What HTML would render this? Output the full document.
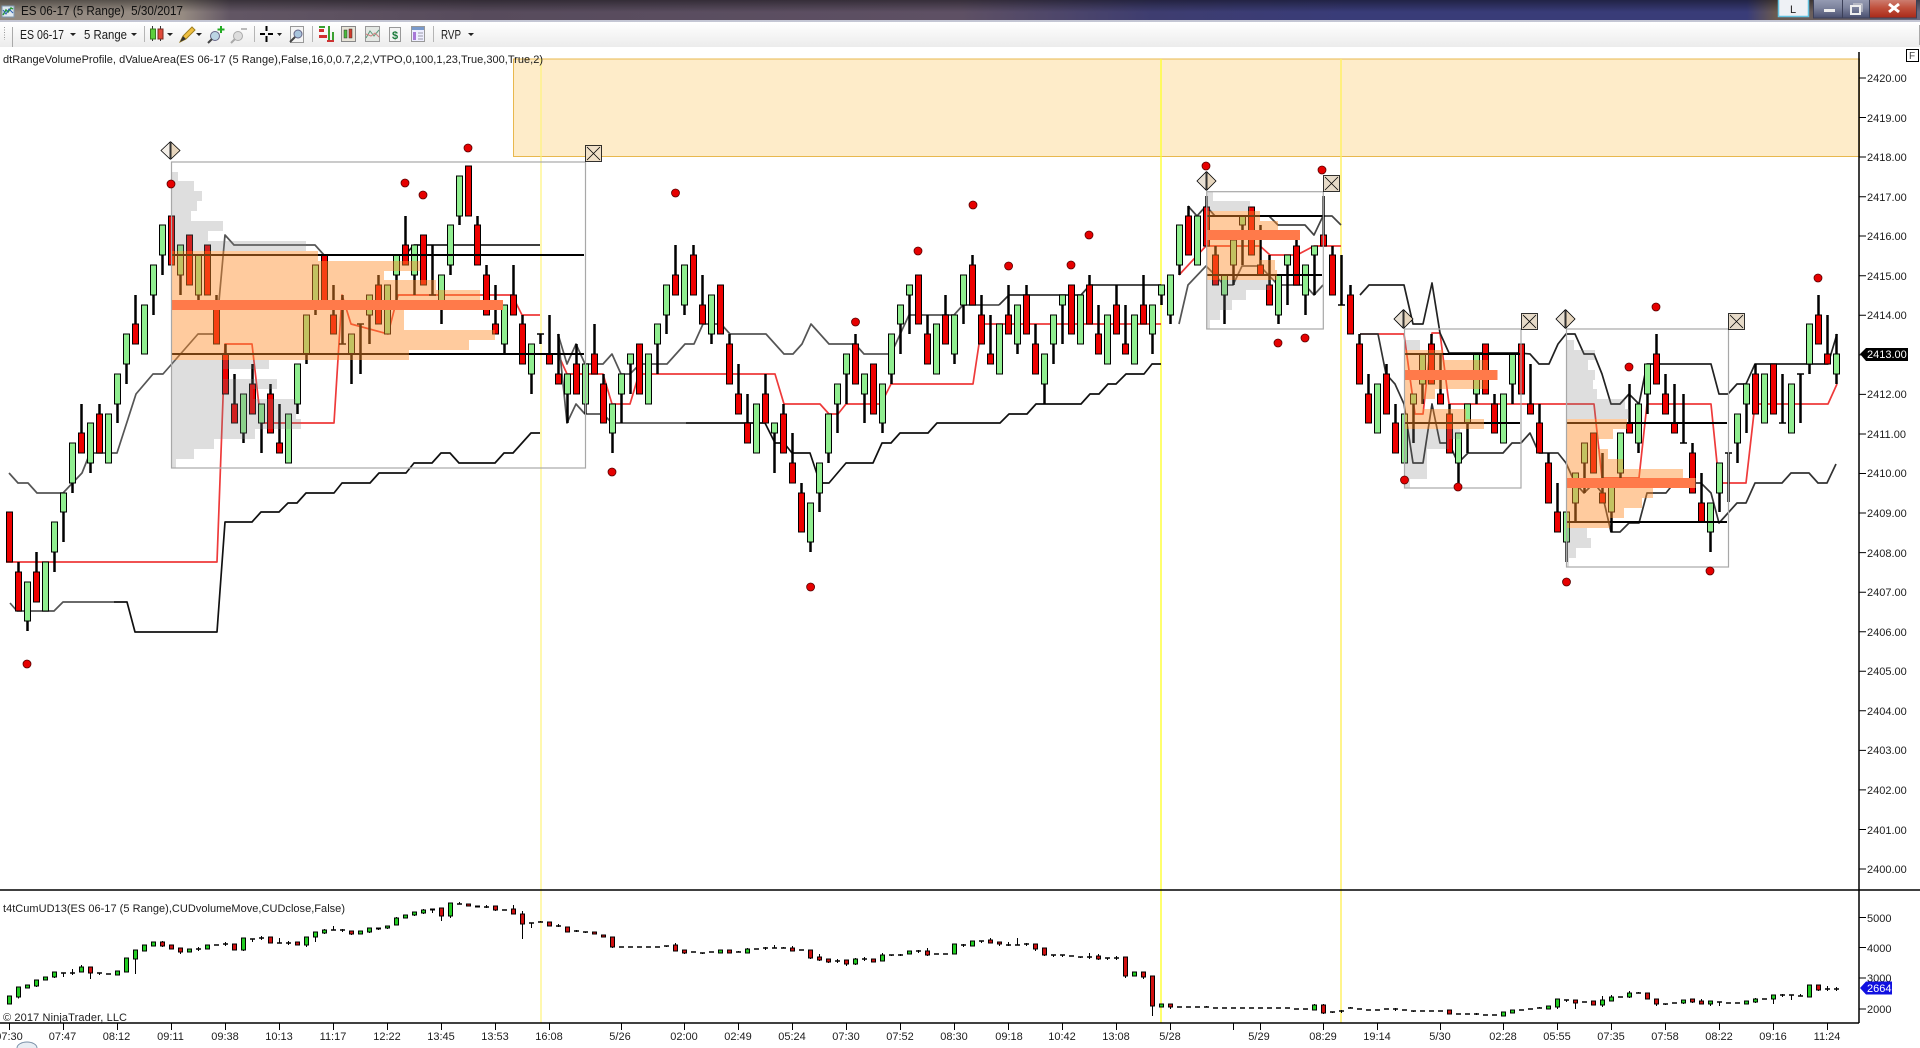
<!DOCTYPE html>
<html><head><meta charset="utf-8"><title>ES 06-17 (5 Range) 5/30/2017</title>
<style>
html,body{margin:0;padding:0;background:#fff;overflow:hidden}
svg{display:block}
text{font-family:"Liberation Sans",sans-serif;fill:#1c1c1c}
</style></head><body>
<svg width="1920" height="1048" viewBox="0 0 1920 1048" xmlns="http://www.w3.org/2000/svg">
<defs>
<linearGradient id="tb" x1="0" x2="1" y1="0" y2="0">
<stop offset="0" stop-color="#938a80"/><stop offset=".095" stop-color="#968b82"/><stop offset=".12" stop-color="#625664"/><stop offset=".25" stop-color="#574b5c"/><stop offset=".5" stop-color="#5e5064"/><stop offset=".6" stop-color="#3e3d70"/><stop offset=".7" stop-color="#393c78"/><stop offset=".91" stop-color="#393c78"/><stop offset=".925" stop-color="#6a5a50"/><stop offset="1" stop-color="#6a6a80"/>
</linearGradient>
<linearGradient id="tv" x1="0" x2="0" y1="0" y2="1"><stop offset="0" stop-color="#000" stop-opacity=".42"/><stop offset=".6" stop-color="#000" stop-opacity="0"/></linearGradient>
<linearGradient id="tool" x1="0" x2="0" y1="0" y2="1"><stop offset="0" stop-color="#fff"/><stop offset="1" stop-color="#ececec"/></linearGradient>
<linearGradient id="wb" x1="0" x2="0" y1="0" y2="1"><stop offset="0" stop-color="#9aa0b8"/><stop offset=".5" stop-color="#7c829c"/><stop offset="1" stop-color="#4a5070"/></linearGradient>
<linearGradient id="wc" x1="0" x2="0" y1="0" y2="1"><stop offset="0" stop-color="#d0887c"/><stop offset=".5" stop-color="#c0503c"/><stop offset="1" stop-color="#a82818"/></linearGradient>
</defs>
<rect width="1920" height="1048" fill="#fff"/>
<!-- title bar -->
<rect width="1920" height="20" fill="url(#tb)"/><rect width="1920" height="20" fill="url(#tv)"/>
<rect y="20" width="1920" height="2" fill="#c4c6d4"/>
<rect y="22" width="1920" height="25" fill="url(#tool)"/>
<rect x="1919" y="25" width="1" height="20" fill="#aaa"/>
<g><rect x="2" y="6" width="12" height="11" fill="#dfe8f0" stroke="#7f98b0"/><path d="M3 15 6 10 8 12 11 8 13 9" fill="none" stroke="#2a9a3a" stroke-width="1.5"/><path d="M3 10 6 14 9 9 13 13" fill="none" stroke="#2a60b0"/></g>
<text x="21" y="15" font-size="13" textLength="162" lengthAdjust="spacingAndGlyphs" style="fill:#111">ES 06-17 (5 Range)&#160;&#160;5/30/2017</text>
<!-- L tab and window buttons -->
<rect x="1778.5" y="-1" width="30" height="17.5" fill="#eef1f5" stroke="#63c2e0" stroke-width="1.5"/>
<text x="1790" y="13" font-size="11" style="fill:#222">L</text>
<rect x="1813.5" y="-2" width="29" height="20" fill="url(#wb)" stroke="#3c4058"/>
<rect x="1842.5" y="-2" width="27" height="20" fill="url(#wb)" stroke="#3c4058"/>
<rect x="1869.5" y="-2" width="47" height="20" fill="url(#wc)" stroke="#3c4058"/>
<rect x="1824" y="9" width="11" height="3" fill="#eee"/>
<rect x="1851" y="6" width="9" height="8" fill="none" stroke="#eee" stroke-width="2"/><path d="M1853 4h9v8" fill="none" stroke="#ddd"/>
<path d="M1889 4 1899 12M1899 4 1889 12" stroke="#fff" stroke-width="3"/>
<!-- toolbar -->
<path d="M4.5 27v13" stroke="#999" stroke-dasharray="1 1.5"/>
<path d="M12.5 27v20" stroke="#aaa"/>
<rect x="144" y="26" width="1" height="16" fill="#b5b5b5"/><rect x="254" y="26" width="1" height="16" fill="#b5b5b5"/><rect x="312" y="26" width="1" height="16" fill="#b5b5b5"/><rect x="433" y="26" width="1" height="16" fill="#b5b5b5"/>
<text x="20" y="39" font-size="13" textLength="44" lengthAdjust="spacingAndGlyphs">ES 06-17</text><text x="84" y="39" font-size="13" textLength="43" lengthAdjust="spacingAndGlyphs">5 Range</text><text x="441" y="39" font-size="13" textLength="20" lengthAdjust="spacingAndGlyphs">RVP</text>
<path d="M70 33h6l-3 3zM131 33h6l-3 3zM167 33h6l-3 3zM196 33h6l-3 3zM277 33h5l-2.500 3zM468 33h6l-3 3z" fill="#222"/>
<path d="M152.500 26v15M160.500 26v15" stroke="#333"/><rect x="150.500" y="29" width="5" height="10" fill="#5ccf3c" stroke="#3a7a20"/><rect x="158" y="29" width="5" height="10" fill="#e04a3a" stroke="#7a2a20"/>
<path d="M180 42l3-6 9-9 3 3-9 9z" fill="#f0c040" stroke="#a08020"/><path d="M180 42l3-6 3 3z" fill="#333"/>
<circle cx="215" cy="36" r="4.500" fill="#bcd4e4" stroke="#668"/><path d="M212 39l-4 4" stroke="#444" stroke-width="2"/><path d="M221 26v7M217.500 29.500h7" stroke="#22aa22" stroke-width="2"/>
<circle cx="238" cy="36" r="4.500" fill="#ddd" stroke="#aaa"/><path d="M235 39l-4 4" stroke="#aaa" stroke-width="2"/><path d="M241 29h6" stroke="#bbb" stroke-width="2"/>
<path d="M266.500 26v5M266.500 36v6M260 34h5M268 34h5" stroke="#000" stroke-width="2"/>
<rect x="290.500" y="26.500" width="13" height="16" fill="#f4f4f4" stroke="#999"/><circle cx="298" cy="34" r="4" fill="#a8c4dc" stroke="#668"/><path d="M295 37l-5 5" stroke="#444" stroke-width="2"/>
<path d="M319 29h5v3h-5zM319 35h8v3h-8z" fill="#d03030"/><path d="M319 26h6v2h-6z" fill="#3aa030"/><path d="M329 26v15M333 32v10" stroke="#3aa030" stroke-width="2"/><path d="M327 41h7" stroke="#c33" stroke-width="2"/>
<rect x="341.500" y="26.500" width="14" height="15" fill="#e8e4d8" stroke="#888"/><rect x="344" y="30" width="3" height="8" fill="#4aba3a" stroke="#333" stroke-width=".5"/><rect x="349" y="29" width="3" height="9" fill="#d03a2a" stroke="#333" stroke-width=".5"/>
<rect x="365.500" y="26.500" width="14" height="15" fill="#e4e8e4" stroke="#999"/><path d="M366 38 370 31 374 36 379 30" fill="none" stroke="#5a9a7a"/><path d="M366 34 371 36 375 33 379 37" fill="none" stroke="#d08080"/>
<rect x="389.500" y="27.500" width="11" height="14" fill="#f4f4f4" stroke="#999"/><text x="392" y="39" font-size="11" font-weight="bold" style="fill:#1a7a3a">$</text>
<rect x="411.500" y="26.500" width="13" height="15" fill="#eef" stroke="#999"/><rect x="412" y="27" width="12" height="3" fill="#7a9acc"/><rect x="413" y="32" width="3" height="8" fill="#a878d8"/><path d="M418 33h5M418 36h5M418 39h5" stroke="#99a"/>
<!-- zone -->
<rect x="513.500" y="59" width="1346" height="97.500" fill="#feecc9" stroke="#e8b84e"/>
<!-- yellow verticals -->
<path d="M541 59V1023" stroke="#fff27a" stroke-width="1.200"/><path d="M1161 59V1023" stroke="#ffff30" stroke-width="1.400"/><path d="M1341 59V1023" stroke="#fff066" stroke-width="1.500"/>
<!-- indicator lines -->
<g fill="none" stroke-width="1.700" stroke-linejoin="round">
<polyline stroke="#ee3a3a" points="6,562 217,562 225,344 252,344 261,423 334,423 342,295 351,324 388,334 398,295 512,295 522,315 540,315"/>
<polyline stroke="#ee3a3a" points="558,354 567,374 603,374 612,404 630,404 639,374 775,374 784,404 820,404 829,414 838,414 846,404 881,404 891,384 973,384 982,324 1161,324"/>
<polyline stroke="#ee3a3a" points="1179,275 1206,246 1260,246 1270,255 1297,255 1314,246 1341,246"/>
<polyline stroke="#ee3a3a" points="1360,334 1404,334 1415,414 1423,414 1432,333 1440,333 1449,404 1594,404 1602,478 1639,478 1647,404 1711,404 1719,483 1746,483 1755,404 1828,404 1837,384"/>
<polyline stroke="#555" points="9,473 18,483 28,483 37,493 63,493 82,473 90,453 117,453 136,394 153,374 163,374 198,334 216,334 225,235 234,245 315,245 324,255"/>
<polyline stroke="#222" points="405,255 414,245 540,245"/>
<polyline stroke="#555" points="10,603 17,611 54,611 63,602 114,602"/>
<polyline stroke="#111" points="114,602 127,602 135,632 217,632 225,522 252,522 261,512 279,512 288,503 297,503 306,493 334,493 342,483 370,483 379,473 406,473 414,463 432,463 441,453 450,453 459,463 495,463 504,453 513,453 531,433 540,433"/>
<polyline stroke="#555" points="558,334 567,364 576,344 585,364 603,364 612,354 621,374 630,374 640,364 667,364 685,344 694,344 703,324 721,324 730,334 766,334 784,354 793,354 802,344 811,324 829,344 855,344 864,354 891,354 909,315 954,315 963,305 999,305"/>
<polyline stroke="#333" points="999,305 1009,295 1081,295 1090,285 1161,285"/>
<polyline stroke="#555" points="558,334 567,423 576,404 585,414 603,414 612,423 686,423"/>
<polyline stroke="#111" points="686,423 765,423 775,443 784,443 792,453 810,453 820,483 829,483 846,463 873,463 882,443 891,443 900,433 928,433 937,423 1000,423 1009,414 1027,414 1036,404 1081,404 1090,394 1099,394 1108,384 1116,384 1126,374 1144,374 1152,364 1161,364"/>
<polyline stroke="#444" points="1188,206 1197,216 1206,206 1215,216 1269,216 1278,225 1305,225 1314,235 1323,216 1332,216 1341,225"/>
<polyline stroke="#555" points="1179,324 1188,285 1206,266 1215,275 1224,285 1233,285 1242,266 1260,266 1278,285 1305,285 1314,295 1323,285"/>
<polyline stroke="#222" points="1360,295 1369,285 1404,285 1413,324 1423,324 1432,283 1440,333 1449,353 1519,353 1530,354 1539,364 1549,364 1558,344 1566,334 1575,334 1584,354 1594,354 1602,374 1611,404 1620,404 1629,394 1639,404 1647,364 1711,364 1719,394 1728,394 1737,384 1746,384 1755,364 1828,364 1837,334"/>
<polyline stroke="#333" points="1360,334 1378,334 1386,374 1395,384 1404,404 1413,463 1423,463 1432,404 1440,443 1449,443 1458,463 1468,453 1503,453 1512,443 1521,443 1530,433 1539,453 1558,453 1566,463 1575,483 1584,493 1594,483 1602,493 1611,532 1620,532 1629,523 1639,523 1647,493 1666,493 1674,483 1701,483 1711,493 1719,523 1728,513 1737,503 1746,503 1755,483 1782,483 1791,473 1809,473 1818,483 1827,483 1836,464"/>
</g>
<!-- main wicks -->
<path fill="none" stroke="#000" stroke-width="2.500" d="M18.500 562V572M27.500 621V631M36.500 552V572M54.500 552V572M63.500 512V542M72.500 483V493M81.500 404V433M90.500 463V473M99.500 404V414M117.500 404V423M126.500 364V384M135.500 295V324M153.500 295V315M162.500 255V275M180.500 275V295M198.500 295V300M216.500 295V305M225.500 344V354M234.500 374V404M243.500 433V443M252.500 364V384M261.500 423V453M270.500 384V394M279.500 404V443M297.500 404V414M306.500 354V364M315.500 305V315M333.500 285V315M342.500 295V344M351.500 354V384M360.500 324V374M369.500 315V344M378.500 275V285M396.500 275V300M405.500 216V245M414.500 275V295M432.500 245V295M441.500 305V324M450.500 265V275M459.500 216V225M477.500 216V225M486.500 265V275M495.500 285V324M504.500 344V354M513.500 265V295M522.500 315V324M531.500 374V394M540.500 334V344M549.500 315V354M558.500 334V374M567.500 394V423M576.500 344V364M585.500 404V414M594.500 324V354M603.500 374V384M612.500 433V453M621.500 394V423M630.500 364V394M657.500 344V374M666.500 315V334M675.500 245V275M684.500 305V315M693.500 245V255M702.500 275V305M711.500 334V344M729.500 334V344M738.500 364V394M747.500 394V423M765.500 374V394M774.500 433V473M783.500 404V414M792.500 433V463M801.500 483V493M810.500 542V552M819.500 493V512M828.500 453V463M837.500 404V433M846.500 374V404M855.500 334V344M864.500 394V423M882.500 423V433M891.500 374V384M900.500 324V354M909.500 295V334M927.500 315V334M945.500 295V315M954.500 354V364M963.500 305V324M972.500 255V265M981.500 295V315M990.500 315V354M1008.500 285V315M1017.500 344V354M1026.500 285V295M1035.500 324V344M1044.500 384V404M1053.500 344V364M1062.500 305V344M1089.500 275V285M1098.500 305V334M1116.500 285V305M1125.500 305V344M1143.500 275V305M1152.500 334V354M1161.500 295V305M1170.500 315V324M1179.500 265V275M1188.500 206V216M1206.500 196V207M1215.500 246V255M1224.500 295V324M1233.500 265V285M1242.500 225V265M1260.500 225V265M1269.500 255V285M1278.500 315V324M1287.500 265V305M1296.500 240V246M1305.500 295V315M1314.500 255V295M1323.500 196V235M1332.500 246V255M1341.500 255V305M1350.500 285V295M1359.500 334V344M1368.500 374V394M1386.500 364V374M1395.500 404V423M1413.500 404V443M1422.500 384V404M1431.500 334V344M1440.500 354V394M1449.500 404V414M1458.500 463V483M1467.500 423V453M1476.500 394V404M1494.500 394V404M1512.500 384V404M1530.500 364V404M1539.500 404V423M1548.500 453V463M1557.500 483V512M1566.500 542V562M1575.500 503V523M1584.500 463V493M1602.500 453V493M1611.500 512V532M1620.500 473V483M1629.500 384V423M1638.500 443V453M1647.500 394V414M1656.500 334V354M1665.500 374V394M1674.500 384V423M1683.500 394V443M1692.500 443V453M1701.500 473V503M1710.500 532V552M1719.500 493V512M1728.500 453V502M1737.500 443V463M1746.500 404V433M1755.500 364V374M1782.500 374V423M1800.500 374V423M1809.500 364V374M1818.500 295V315M1827.500 315V354M1836.500 334V354M1836.500 374V384"/>
<path fill="none" stroke="#000" stroke-width="1.500" d="M339 344h7M357 324h7M429 295h7M537 334h7M1338 305h7M1680 443h7M1725 453h7M1779 423h7M1797 374h7"/>
<!-- green bodies -->
<path fill="#90ee90" stroke="#000" d="M24.500 582h6V621h-6zM42.500 562h6V611h-6zM51.500 522h6V552h-6zM60.500 493h6V512h-6zM69.500 443h6V483h-6zM87.500 423h6V463h-6zM105.500 414h6V463h-6zM114.500 374h6V404h-6zM123.500 334h6V364h-6zM141.500 305h6V354h-6zM150.500 265h6V295h-6zM159.500 225h6V255h-6zM177.500 245h6V275h-6zM195.500 255h6V295h-6zM240.500 394h6V433h-6zM258.500 404h6V423h-6zM285.500 414h6V463h-6zM294.500 364h6V404h-6zM303.500 315h6V354h-6zM312.500 265h6V305h-6zM348.500 334h6V354h-6zM366.500 295h6V315h-6zM384.500 285h6V334h-6zM393.500 255h6V275h-6zM411.500 245h6V275h-6zM438.500 275h6V305h-6zM447.500 225h6V265h-6zM456.500 176h6V216h-6zM501.500 305h6V344h-6zM528.500 344h6V374h-6zM564.500 374h6V394h-6zM582.500 364h6V404h-6zM609.500 404h6V433h-6zM618.500 374h6V394h-6zM627.500 354h6V364h-6zM645.500 354h6V404h-6zM654.500 324h6V344h-6zM663.500 285h6V315h-6zM681.500 265h6V305h-6zM708.500 295h6V334h-6zM753.500 404h6V453h-6zM771.500 423h6V433h-6zM807.500 503h6V542h-6zM816.500 463h6V493h-6zM825.500 414h6V453h-6zM834.500 384h6V404h-6zM843.500 354h6V374h-6zM861.500 374h6V394h-6zM879.500 384h6V423h-6zM888.500 334h6V374h-6zM897.500 305h6V324h-6zM906.500 285h6V295h-6zM933.500 324h6V374h-6zM951.500 315h6V354h-6zM960.500 275h6V305h-6zM996.500 324h6V374h-6zM1014.500 305h6V344h-6zM1041.500 354h6V384h-6zM1050.500 315h6V344h-6zM1059.500 295h6V305h-6zM1077.500 295h6V344h-6zM1104.500 315h6V364h-6zM1131.500 315h6V364h-6zM1149.500 305h6V334h-6zM1158.500 285h6V295h-6zM1167.500 275h6V315h-6zM1176.500 225h6V265h-6zM1194.500 216h6V265h-6zM1221.500 275h6V295h-6zM1230.500 240h6V265h-6zM1239.500 216h6V225h-6zM1275.500 275h6V315h-6zM1284.500 255h6V265h-6zM1302.500 265h6V295h-6zM1311.500 246h6V255h-6zM1374.500 384h6V433h-6zM1401.500 414h6V463h-6zM1410.500 394h6V404h-6zM1419.500 354h6V384h-6zM1455.500 433h6V463h-6zM1464.500 404h6V423h-6zM1473.500 354h6V394h-6zM1500.500 394h6V443h-6zM1509.500 354h6V384h-6zM1563.500 512h6V542h-6zM1572.500 473h6V503h-6zM1581.500 443h6V463h-6zM1608.500 483h6V512h-6zM1617.500 433h6V473h-6zM1635.500 404h6V443h-6zM1644.500 364h6V394h-6zM1707.500 503h6V532h-6zM1716.500 463h6V493h-6zM1734.500 414h6V443h-6zM1743.500 384h6V404h-6zM1761.500 374h6V423h-6zM1788.500 384h6V433h-6zM1806.500 324h6V364h-6zM1833.500 354h6V374h-6z"/>
<!-- red bodies -->
<path fill="#ee0000" stroke="#000" d="M6.500 512h6V562h-6zM15.500 572h6V611h-6zM33.500 572h6V602h-6zM78.500 433h6V453h-6zM96.500 414h6V453h-6zM132.500 324h6V344h-6zM168.500 216h6V265h-6zM186.500 235h6V285h-6zM204.500 245h6V295h-6zM213.500 305h6V344h-6zM222.500 354h6V394h-6zM231.500 404h6V423h-6zM249.500 384h6V414h-6zM267.500 394h6V433h-6zM276.500 443h6V453h-6zM321.500 255h6V305h-6zM330.500 315h6V334h-6zM375.500 285h6V324h-6zM402.500 245h6V265h-6zM420.500 235h6V285h-6zM465.500 166h6V216h-6zM474.500 225h6V265h-6zM483.500 275h6V315h-6zM492.500 324h6V334h-6zM510.500 295h6V315h-6zM519.500 324h6V364h-6zM546.500 354h6V364h-6zM555.500 374h6V384h-6zM573.500 364h6V394h-6zM591.500 354h6V374h-6zM600.500 384h6V423h-6zM636.500 344h6V394h-6zM672.500 275h6V295h-6zM690.500 255h6V295h-6zM699.500 305h6V324h-6zM717.500 285h6V334h-6zM726.500 344h6V384h-6zM735.500 394h6V414h-6zM744.500 423h6V443h-6zM762.500 394h6V423h-6zM780.500 414h6V453h-6zM789.500 463h6V483h-6zM798.500 493h6V532h-6zM852.500 344h6V384h-6zM870.500 364h6V414h-6zM915.500 275h6V324h-6zM924.500 334h6V364h-6zM942.500 315h6V344h-6zM969.500 265h6V305h-6zM978.500 315h6V344h-6zM987.500 354h6V364h-6zM1005.500 315h6V334h-6zM1023.500 295h6V334h-6zM1032.500 344h6V374h-6zM1068.500 285h6V334h-6zM1086.500 285h6V324h-6zM1095.500 334h6V354h-6zM1113.500 305h6V334h-6zM1122.500 344h6V354h-6zM1140.500 305h6V324h-6zM1185.500 216h6V255h-6zM1203.500 207h6V246h-6zM1212.500 255h6V285h-6zM1248.500 207h6V255h-6zM1257.500 265h6V275h-6zM1266.500 285h6V305h-6zM1293.500 246h6V285h-6zM1320.500 235h6V246h-6zM1329.500 255h6V295h-6zM1347.500 295h6V334h-6zM1356.500 344h6V384h-6zM1365.500 394h6V423h-6zM1383.500 374h6V414h-6zM1392.500 423h6V453h-6zM1428.500 344h6V384h-6zM1437.500 394h6V404h-6zM1446.500 414h6V453h-6zM1482.500 344h6V394h-6zM1491.500 404h6V433h-6zM1518.500 344h6V394h-6zM1527.500 404h6V414h-6zM1536.500 423h6V453h-6zM1545.500 463h6V503h-6zM1554.500 512h6V532h-6zM1590.500 433h6V473h-6zM1599.500 493h6V503h-6zM1626.500 423h6V433h-6zM1653.500 354h6V384h-6zM1662.500 394h6V414h-6zM1671.500 423h6V433h-6zM1689.500 453h6V493h-6zM1698.500 503h6V522h-6zM1752.500 374h6V414h-6zM1770.500 364h6V414h-6zM1815.500 315h6V344h-6zM1824.500 354h6V364h-6z"/>
<!-- value area lines -->
<g stroke="#000" stroke-width="2"><path d="M171 255H584M171 354H584M1207 216H1323M1207 275H1322M1405 354H1520M1405 423H1520M1567 423H1727M1567 522H1727"/></g>
<!-- profile gray -->
<path fill="#808080" fill-opacity=".26" d="M171 172h7v9h-7zM171 181h23v10h-23zM171 191h31v10h-31zM171 201h26v10h-26zM171 211h20v10h-20zM171 221h52v10h-52zM171 231h37v10h-37zM171 241h135v10h-135zM171 360h98v9h-98zM171 369h52v10h-52zM171 379h106v10h-106zM171 389h82v10h-82zM171 399h125v20h-125zM171 419h130v10h-130zM171 429h84v10h-84zM171 439h43v10h-43zM171 449h23v10h-23zM171 459h5v9h-5zM1207 192h6v9h-6zM1207 201h43v10h-43zM1207 280h63v10h-63zM1207 290h39v10h-39zM1207 300h25v10h-25zM1207 310h13v10h-13zM1207 320h3v9h-3zM1405 340h15v10h-15zM1405 429h55v10h-55zM1405 439h44v10h-44zM1405 449h22v30h-22zM1405 479h5v9h-5zM1567 340h7v10h-7zM1567 350h28v10h-28zM1567 360h21v10h-21zM1567 370h28v10h-28zM1567 380h26v9h-26zM1567 389h30v10h-30zM1567 399h58v10h-58zM1567 409h62v10h-62zM1567 528h20v10h-20zM1567 538h24v10h-24zM1567 548h9v10h-9zM1567 558h2v9h-2z"/>
<!-- profile orange -->
<path fill="#ff8c28" fill-opacity=".45" d="M171 251h147v10h-147zM171 261h249v10h-249zM171 271h213v9h-213zM171 280h265v10h-265zM171 290h309v10h-309zM171 310h233v20h-233zM171 330h324v10h-324zM171 340h298v10h-298zM171 350h238v10h-238zM1207 211h53v10h-53zM1207 221h71v9h-71zM1207 240h53v20h-53zM1207 260h68v10h-68zM1207 270h70v10h-70zM1405 350h38v10h-38zM1405 360h83v10h-83zM1405 380h83v9h-83zM1405 389h30v10h-30zM1405 399h18v10h-18zM1405 409h61v10h-61zM1405 419h79v10h-79zM1567 419h60v10h-60zM1567 429h46v10h-46zM1567 439h31v10h-31zM1567 449h41v10h-41zM1567 459h56v10h-56zM1567 469h116v9h-116zM1567 488h86v10h-86zM1567 498h75v10h-75zM1567 508h57v10h-57zM1567 518h43v10h-43z"/>
<!-- POC -->
<path fill="#ff7a4a" d="M171 300h332v10h-332zM1207 230h93v10h-93zM1405 370h92.500v10h-92.500zM1567 478h128.500v10h-128.500z"/>
<!-- boxes -->
<g fill="none" stroke="#a8a8a8" stroke-width="1.200"><rect x="171.500" y="162" width="414" height="306"/><rect x="1206.700" y="191.700" width="116.600" height="137.300"/><rect x="1404.500" y="329" width="116.500" height="159"/><rect x="1566.500" y="329" width="162" height="238"/></g>
<!-- diamonds & X boxes -->
<g stroke="#000" stroke-width=".8">
<path d="M170 142v17l-9-8.500z" fill="#f4efe8"/><path d="M171 142v17l9-8.500z" fill="#e6d5bd"/>
<path d="M1206 172v18l-9-9z" fill="#e8e0d4"/><path d="M1207 172v18l9-9z" fill="#e6d5bd"/>
<path d="M1403 310v18l-9-9z" fill="#e8e0d4"/><path d="M1404 310v18l9-9z" fill="#e6d5bd"/>
<path d="M1565 310v18l-9-9z" fill="#e8e0d4"/><path d="M1566 310v18l9-9z" fill="#e6d5bd"/>
<rect x="585.500" y="145.500" width="16" height="16" fill="#f0e0c8"/><path d="M587 147 600 160M600 147 587 160" fill="none"/>
<rect x="1323.500" y="175.500" width="16" height="16" fill="#e6dac8"/><path d="M1325 177 1338 190M1338 177 1325 190" fill="none"/>
<rect x="1521.500" y="313.500" width="16" height="16" fill="#e6dac8"/><path d="M1523 315 1536 328M1536 315 1523 328" fill="none"/>
<rect x="1728.500" y="313.500" width="16" height="16" fill="#e6dac8"/><path d="M1730 315 1743 328M1743 315 1730 328" fill="none"/>
</g>
<!-- dots -->
<g fill="#e60000" stroke="#5a0000" stroke-width=".8">
<circle cx="171" cy="184" r="4"/><circle cx="405" cy="183" r="4"/><circle cx="423" cy="195" r="4"/><circle cx="468" cy="148" r="4"/><circle cx="612" cy="472" r="4"/><circle cx="27" cy="664" r="4"/><circle cx="675.500" cy="193" r="4"/><circle cx="973" cy="205" r="4"/><circle cx="918" cy="251" r="4"/><circle cx="1089" cy="235" r="4"/><circle cx="1008.600" cy="266" r="4"/><circle cx="1071" cy="265" r="4"/><circle cx="855.500" cy="322" r="4"/><circle cx="810.600" cy="587" r="4"/><circle cx="1206" cy="166" r="4"/><circle cx="1278" cy="343" r="4"/><circle cx="1305" cy="338" r="4"/><circle cx="1322" cy="170" r="4"/><circle cx="1404.500" cy="480" r="4"/><circle cx="1458" cy="487" r="4"/><circle cx="1656" cy="307" r="4"/><circle cx="1629" cy="367" r="4"/><circle cx="1566.500" cy="582" r="4"/><circle cx="1710" cy="571" r="4"/><circle cx="1818" cy="278" r="4"/>
</g>
<!-- lower panel wicks -->
<path fill="none" stroke="#000" stroke-width="1" d="M18.500 997V998.500M36.500 986V987M54.500 977V978M63.500 973V977M72.500 969V975M81.500 965V967M90.500 973V979M99.500 973V975M135.500 959V974M162.500 941V947M180.500 952V954M198.500 947V951M225.500 942V946M243.500 950V951M252.500 939V942M261.500 936V940M279.500 938V943M288.500 941V945M306.500 945V947M315.500 937V942M324.500 929V934M333.500 926V930M342.500 929V932M351.500 934V935M369.500 932V933M378.500 929V930M387.500 928V929M396.500 917V918M414.500 915V916M423.500 909V914M432.500 910V913M441.500 916V921M450.500 916V918M459.500 902V904M486.500 905V908M495.500 910V911M513.500 905V909M522.500 911V939M531.500 923V928M540.500 921V922M558.500 924V927M576.500 930V932M585.500 932V933M612.500 947V948M666.500 946V947M675.500 943V945M684.500 953V954M702.500 953V954M738.500 951V952M747.500 948V949M765.500 947V950M774.500 945V948M783.500 947V948M792.500 946V948M810.500 958V959M819.500 954V961M828.500 962V963M837.500 959V963M846.500 964V966M855.500 958V965M864.500 957V961M882.500 953V955M891.500 955V956M900.500 954V956M918.500 950V953M927.500 948V956M963.500 944V947M981.500 941V943M990.500 938V940M999.500 944V946M1008.500 942V946M1017.500 938V945M1026.500 943V946M1035.500 949V951M1044.500 955V956M1053.500 955V957M1062.500 955V957M1080.500 957V958M1089.500 953V959M1098.500 954V960M1107.500 958V960M1116.500 956V960M1125.500 976V978M1143.500 977V979M1152.500 1006V1016M1170.500 1007V1009M1206.500 1006V1007M1314.500 1004V1005M1323.500 1004V1014M1332.500 1012V1013M1341.500 1010V1013M1350.500 1007V1008M1395.500 1008V1011M1413.500 1011V1012M1476.500 1013V1015M1539.500 1007V1008M1557.500 1007V1009M1566.500 1000V1002M1575.500 1003V1009M1602.500 996V1007M1611.500 995V997M1629.500 991V998M1638.500 992V993M1656.500 1004V1006M1665.500 1004V1005M1683.500 1003V1004M1692.500 1002V1003M1701.500 999V1001M1710.500 1004V1006M1719.500 1002V1006M1755.500 998V1003M1773.500 999V1004M1782.500 994V997M1791.500 995V1000M1800.500 994V996M1818.500 990V991M1827.500 986V991M1836.500 987V991"/>
<!-- lower panel dojis -->
<path fill="none" stroke="#000" stroke-width="1.500" d="M61 973h5M70 973h5M97 973h5M106 974h5M196 949h5M214 945h5M223 944h5M250 939h5M259 938h5M277 943h5M286 943h5M331 930h5M340 930h5M457 904h5M484 907h5M502 910h5M529 923h5M538 922h5M556 926h5M574 931h5M583 932h5M619 947h5M628 947h5M637 947h5M646 947h5M655 947h5M664 946h5M691 952h5M700 953h5M709 952h5M736 952h5M754 949h5M763 948h5M772 948h5M781 948h5M799 950h5M835 961h5M862 959h5M889 955h5M898 955h5M916 951h5M934 954h5M943 954h5M961 945h5M979 941h5M1006 945h5M1015 945h5M1024 944h5M1051 955h5M1060 955h5M1069 956h5M1078 957h5M1087 957h5M1105 958h5M1114 958h5M1177 1007h5M1186 1007h5M1195 1007h5M1204 1007h5M1213 1008h5M1222 1008h5M1231 1008h5M1240 1008h5M1249 1008h5M1258 1008h5M1267 1008h5M1276 1008h5M1285 1008h5M1294 1009h5M1303 1009h5M1330 1012h5M1339 1011h5M1348 1008h5M1357 1009h5M1366 1010h5M1375 1010h5M1384 1009h5M1393 1009h5M1402 1010h5M1411 1011h5M1420 1011h5M1429 1011h5M1438 1011h5M1456 1014h5M1465 1014h5M1474 1014h5M1483 1015h5M1492 1015h5M1519 1010h5M1528 1009h5M1537 1008h5M1564 1000h5M1582 1002h5M1618 997h5M1636 993h5M1663 1004h5M1672 1003h5M1717 1002h5M1726 1003h5M1735 1003h5M1762 999h5M1780 995h5M1789 995h5M1798 996h5M1825 989h5M1834 989h5"/>
<!-- lower green -->
<path fill="#22cc22" stroke="#000" d="M7.500 996h4V1004h-4zM16.500 987h4V997h-4zM25.500 985h4V988h-4zM34.500 980h4V986h-4zM43.500 977h4V980h-4zM52.500 972h4V977h-4zM79.500 967h4V972h-4zM115.500 971h4V975h-4zM124.500 958h4V972h-4zM133.500 950h4V959h-4zM142.500 945h4V951h-4zM151.500 942h4V946h-4zM187.500 949h4V952h-4zM205.500 945h4V949h-4zM241.500 938h4V950h-4zM304.500 937h4V945h-4zM313.500 932h4V937h-4zM322.500 930h4V933h-4zM358.500 931h4V934h-4zM367.500 928h4V932h-4zM385.500 926h4V928h-4zM394.500 918h4V925h-4zM403.500 915h4V918h-4zM412.500 912h4V915h-4zM421.500 910h4V913h-4zM430.500 909h4V910h-4zM448.500 903h4V916h-4zM718.500 950h4V953h-4zM745.500 949h4V953h-4zM853.500 959h4V964h-4zM880.500 955h4V961h-4zM907.500 951h4V954h-4zM952.500 944h4V954h-4zM970.500 941h4V946h-4zM1132.500 972h4V976h-4zM1159.500 1004h4V1007h-4zM1312.500 1005h4V1010h-4zM1501.500 1012h4V1016h-4zM1510.500 1010h4V1013h-4zM1546.500 1006h4V1009h-4zM1555.500 999h4V1007h-4zM1600.500 1000h4V1005h-4zM1609.500 997h4V1001h-4zM1627.500 993h4V997h-4zM1681.500 1000h4V1003h-4zM1708.500 1001h4V1004h-4zM1744.500 1001h4V1004h-4zM1753.500 999h4V1002h-4zM1771.500 995h4V999h-4zM1807.500 985h4V997h-4z"/>
<!-- lower red -->
<path fill="#d01010" stroke="#000" d="M88.500 967h4V973h-4zM160.500 942h4V946h-4zM169.500 945h4V949h-4zM178.500 948h4V952h-4zM232.500 944h4V950h-4zM268.500 937h4V943h-4zM295.500 942h4V945h-4zM349.500 931h4V934h-4zM376.500 928h4V929h-4zM439.500 908h4V916h-4zM466.500 904h4V906h-4zM475.500 906h4V907h-4zM493.500 906h4V910h-4zM511.500 909h4V914h-4zM520.500 914h4V924h-4zM547.500 922h4V926h-4zM565.500 927h4V932h-4zM592.500 932h4V934h-4zM601.500 935h4V937h-4zM610.500 937h4V947h-4zM673.500 945h4V951h-4zM682.500 950h4V953h-4zM727.500 950h4V953h-4zM790.500 948h4V951h-4zM808.500 950h4V958h-4zM817.500 957h4V960h-4zM826.500 959h4V962h-4zM844.500 960h4V964h-4zM871.500 959h4V962h-4zM925.500 951h4V955h-4zM988.500 940h4V943h-4zM997.500 942h4V944h-4zM1033.500 944h4V949h-4zM1042.500 948h4V955h-4zM1096.500 956h4V959h-4zM1123.500 957h4V976h-4zM1141.500 972h4V977h-4zM1150.500 976h4V1006h-4zM1168.500 1004h4V1007h-4zM1321.500 1005h4V1013h-4zM1447.500 1010h4V1014h-4zM1573.500 1000h4V1003h-4zM1591.500 1001h4V1005h-4zM1645.500 993h4V999h-4zM1654.500 999h4V1004h-4zM1690.500 999h4V1002h-4zM1699.500 1001h4V1004h-4zM1816.500 985h4V990h-4z"/>
<!-- axes -->
<path d="M0 890H1920M0 1023H1859M1859 52V1023" stroke="#000" stroke-width="1.500" fill="none"/>
<path stroke="#000" fill="none" d="M1859 78h7M1859 117.500h7M1859 157h7M1859 196.700h7M1859 236h7M1859 275.800h7M1859 315.300h7M1859 354.900h7M1859 394.400h7M1859 434h7M1859 473.500h7M1859 513h7M1859 552.600h7M1859 592.200h7M1859 631.700h7M1859 671.300h7M1859 710.800h7M1859 750.400h7M1859 789.900h7M1859 829.500h7M1859 869h7M1859 917.500h7M1859 947.500h7M1859 978h7M1859 1009h7M9.500 1023v7M63.500 1023v7M117.500 1023v7M171.500 1023v7M225.500 1023v7M279.500 1023v7M333.500 1023v7M387.500 1023v7M441.500 1023v7M495.500 1023v7M549.500 1023v7M621.500 1023v7M684.500 1023v7M738.500 1023v7M792.500 1023v7M846.500 1023v7M900.500 1023v7M954.500 1023v7M1008.500 1023v7M1062.500 1023v7M1116.500 1023v7M1170.500 1023v7M1233.500 1023v7M1260.500 1023v7M1323.500 1023v7M1377.500 1023v7M1440.500 1023v7M1503.500 1023v7M1557.500 1023v7M1611.500 1023v7M1665.500 1023v7M1719.500 1023v7M1773.500 1023v7M1827.500 1023v7"/>
<g font-size="11">
<text x="1867" y="82">2420.00</text><text x="1867" y="122">2419.00</text><text x="1867" y="161">2418.00</text><text x="1867" y="201">2417.00</text><text x="1867" y="240">2416.00</text><text x="1867" y="280">2415.00</text><text x="1867" y="319">2414.00</text><text x="1867" y="398">2412.00</text><text x="1867" y="438">2411.00</text><text x="1867" y="477">2410.00</text><text x="1867" y="517">2409.00</text><text x="1867" y="557">2408.00</text><text x="1867" y="596">2407.00</text><text x="1867" y="636">2406.00</text><text x="1867" y="675">2405.00</text><text x="1867" y="715">2404.00</text><text x="1867" y="754">2403.00</text><text x="1867" y="794">2402.00</text><text x="1867" y="834">2401.00</text><text x="1867" y="873">2400.00</text>
<text x="1867" y="922">5000</text><text x="1867" y="952">4000</text><text x="1867" y="982">3000</text><text x="1867" y="1013">2000</text>
</g>
<path d="M1860 354 1866 348H1908V361H1866z" fill="#000"/><text x="1867" y="358" font-size="11" style="fill:#fff">2413.00</text>
<path d="M1860 988 1866 981.500H1892V994.500H1866z" fill="#1010e0"/><text x="1867" y="992" font-size="11" style="fill:#fff">2664</text>
<rect x="1906.500" y="49.500" width="12" height="12" fill="#fff" stroke="#000"/><text x="1909" y="59" font-size="10" style="fill:#444">F</text>
<g font-size="11" text-anchor="middle">
<text x="9" y="1040">07:30</text><text x="62.500" y="1040">07:47</text><text x="116.500" y="1040">08:12</text><text x="170.500" y="1040">09:11</text><text x="225" y="1040">09:38</text><text x="279" y="1040">10:13</text><text x="333" y="1040">11:17</text><text x="387" y="1040">12:22</text><text x="441" y="1040">13:45</text><text x="495" y="1040">13:53</text><text x="549" y="1040">16:08</text><text x="620" y="1040">5/26</text><text x="684" y="1040">02:00</text><text x="738" y="1040">02:49</text><text x="792" y="1040">05:24</text><text x="846" y="1040">07:30</text><text x="900" y="1040">07:52</text><text x="954" y="1040">08:30</text><text x="1009" y="1040">09:18</text><text x="1062" y="1040">10:42</text><text x="1116" y="1040">13:08</text><text x="1170" y="1040">5/28</text><text x="1259" y="1040">5/29</text><text x="1323" y="1040">08:29</text><text x="1377" y="1040">19:14</text><text x="1440" y="1040">5/30</text><text x="1503" y="1040">02:28</text><text x="1557" y="1040">05:55</text><text x="1611" y="1040">07:35</text><text x="1665" y="1040">07:58</text><text x="1719" y="1040">08:22</text><text x="1773" y="1040">09:16</text><text x="1827" y="1040">11:24</text>
</g>
<text x="3" y="63" font-size="11" textLength="540">dtRangeVolumeProfile, dValueArea(ES 06-17 (5 Range),False,16,0,0.7,2,2,VTPO,0,100,1,23,True,300,True,2)</text>
<text x="3" y="912" font-size="11" textLength="342">t4tCumUD13(ES 06-17 (5 Range),CUDvolumeMove,CUDclose,False)</text>
<text x="3" y="1021" font-size="11" textLength="124">© 2017 NinjaTrader, LLC</text>
<path d="M17 1048a10 6 0 0 1 20 0" fill="#e8eef4" stroke="#7a90a8"/>
</svg>
</body></html>
